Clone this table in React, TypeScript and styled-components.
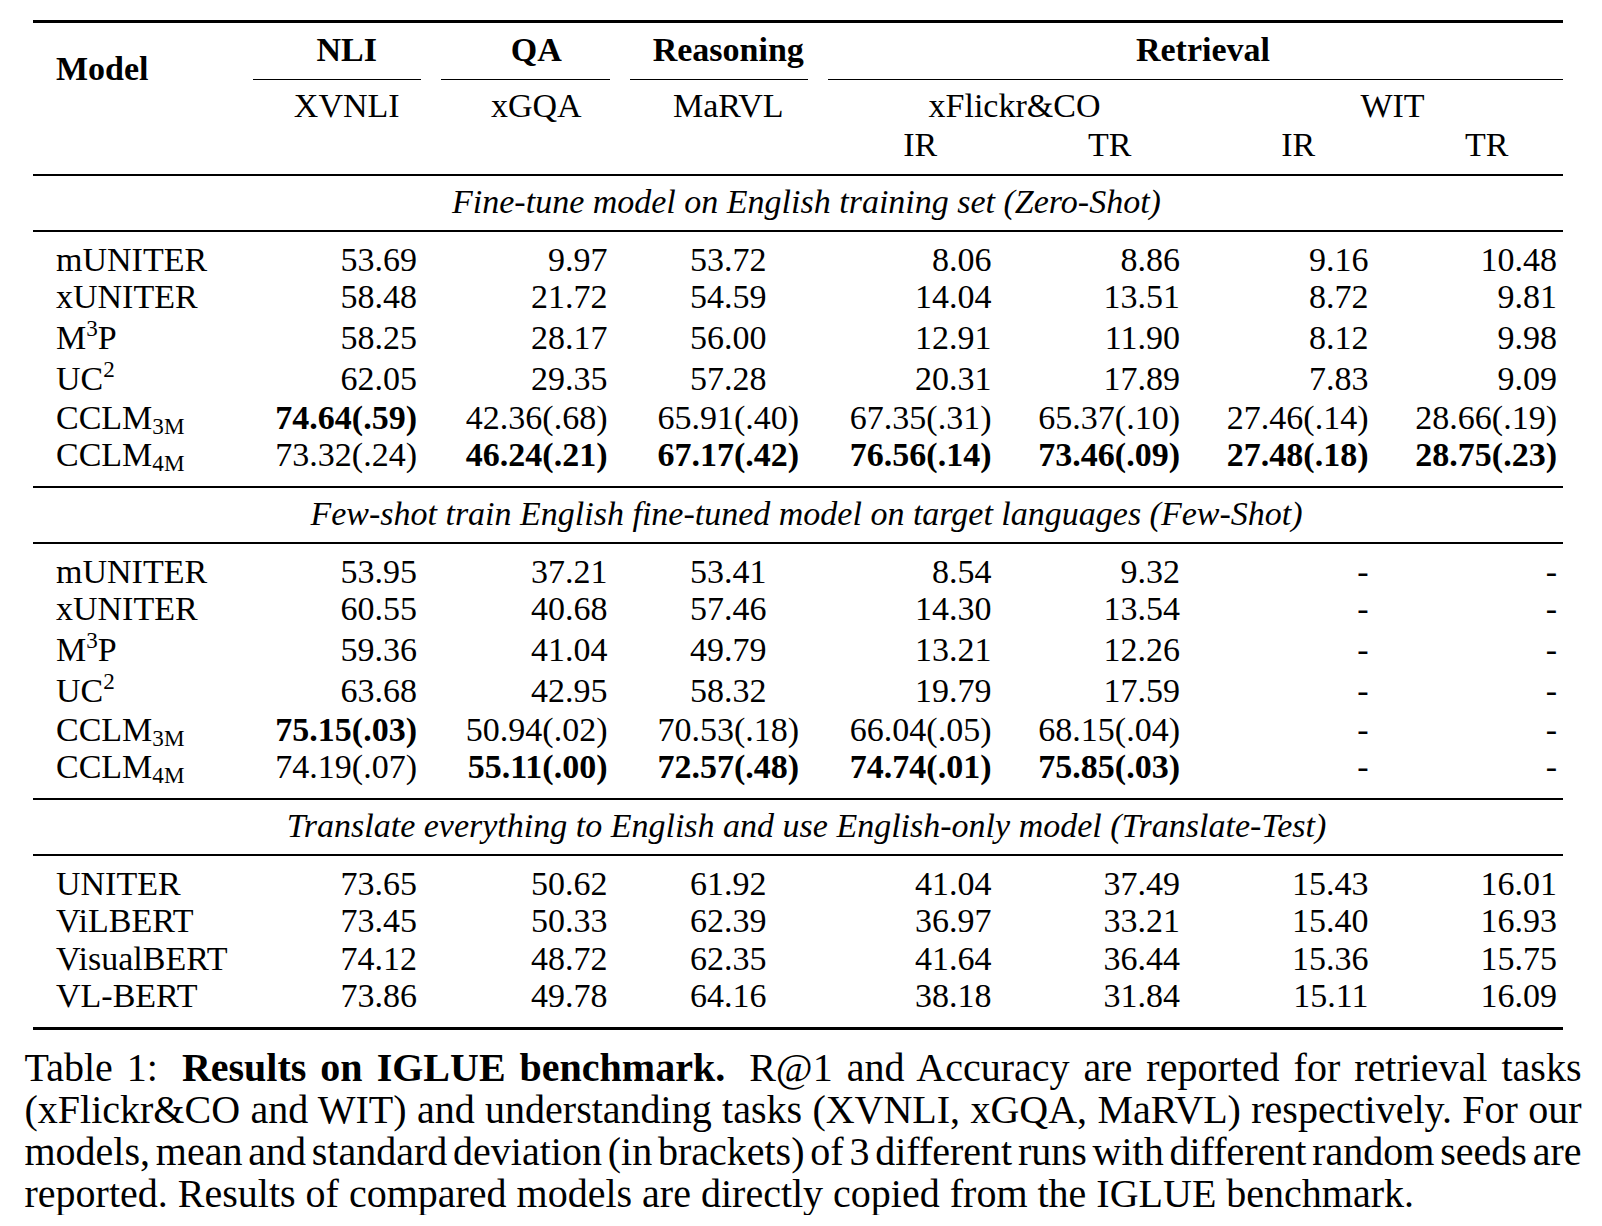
import React from 'react'
import styled, { createGlobalStyle, css } from 'styled-components'

const GlobalStyle = createGlobalStyle`
  html, body {
    margin: 0;
    padding: 0;
    background: #ffffff;
  }
  body {
    font-family: 'Liberation Serif', 'Times New Roman', serif;
    color: #000000;
  }
`

const COLS = '196.5px 188.5px 190.5px 193.5px 190.5px 188.5px 188.5px 164.5px'

const gridCols = css`
  display: grid;
  grid-template-columns: ${COLS};
  padding: 0 6px 0 23px;
`

const Page = styled.div`
  padding-top: 20px;
  width: 1602px;
`

const Table = styled.div`
  margin-left: 33px;
  width: 1530px;
  border-top: 3px solid #000;
  border-bottom: 3px solid #000;
  font-size: 34px;
`

const Head = styled.div`
  ${gridCols}
  grid-template-rows: 57px 45px 49px;
  border-bottom: 2px solid #000;
`

const ModelHead = styled.div`
  grid-column: 1;
  grid-row: 1 / span 3;
  padding-top: 26.5px;
  line-height: 38px;
  font-weight: 700;
`

const Group = styled.div<{ $col: string }>`
  grid-column: ${p => p.$col};
  grid-row: 1;
`

const GroupLabel = styled.div<{ $pl: number; $pr: number }>`
  padding: 8px ${p => p.$pr}px 0 ${p => p.$pl}px;
  line-height: 38px;
  font-weight: 700;
  text-align: center;
  white-space: nowrap;
`

const CMidRule = styled.div<{ $l: number; $r: number }>`
  margin: 9.5px ${p => p.$r}px 0 ${p => p.$l}px;
  height: 1.5px;
  background: #000;
`

const SubHead = styled.div<{ $col: string; $row: number; $pl: number; $pr: number }>`
  grid-column: ${p => p.$col};
  grid-row: ${p => p.$row};
  padding: ${p => (p.$row === 2 ? 7 : 0.5)}px ${p => p.$pr}px 0 ${p => p.$pl}px;
  line-height: 38px;
  text-align: center;
  white-space: nowrap;
`

const SectionTitle = styled.div`
  padding: 7px 6px 8.7px 23px;
  line-height: 38px;
  font-style: italic;
  text-align: center;
  border-bottom: 2px solid #000;
  white-space: nowrap;
`

const Rows = styled.div<{ $last?: boolean }>`
  padding: 9px 0 12.5px;
  border-bottom: ${p => (p.$last ? 'none' : '2px solid #000')};
`

const Row = styled.div<{ $lift?: number }>`
  ${gridCols}
  line-height: 37.5px;
  padding-top: ${p => p.$lift ?? 0}px;
`

type Align = 'left' | 'right' | 'center'

const Cell = styled.div<{ $align: Align; $pr: number; $bold?: boolean }>`
  text-align: ${p => p.$align};
  padding-right: ${p => p.$pr}px;
  font-weight: ${p => (p.$bold ? 700 : 400)};
  white-space: nowrap;
`

const Sup = styled.sup`
  font-size: 0.68em;
  line-height: 0;
  vertical-align: 0.58em;
`

const Sub = styled.sub`
  font-size: 0.68em;
  line-height: 0;
  vertical-align: -0.22em;
`

const Caption = styled.div`
  margin: 16.5px 0 0 24.5px;
  width: 1557px;
  font-size: 40px;
  line-height: 42px;
`

const CapLine = styled.div<{ $last?: boolean }>`
  text-align: ${p => (p.$last ? 'left' : 'justify')};
  text-align-last: ${p => (p.$last ? 'left' : 'justify')};
  word-spacing: ${p => (p.$last ? 0 : -6)}px;
`

const Gap = styled.span`
  display: inline-block;
  width: 10px;
`

// column alignment: model left, r r c r r r r
const ALIGN: Align[] = ['left', 'right', 'right', 'center', 'right', 'right', 'right', 'right']
const PAD = [0, 24, 24, 0, 24, 24, 24, 0]

type DataRow = { model: React.ReactNode; values: string[]; lift?: number }

const M3P = <>M<Sup>3</Sup>P</>
const UC2 = <>UC<Sup>2</Sup></>
const CCLM3 = <>CCLM<Sub>3M</Sub></>
const CCLM4 = <>CCLM<Sub>4M</Sub></>

const zeroShot: DataRow[] = [
  { model: 'mUNITER', values: ['53.69', '9.97', '53.72', '8.06', '8.86', '9.16', '10.48'] },
  { model: 'xUNITER', values: ['58.48', '21.72', '54.59', '14.04', '13.51', '8.72', '9.81'] },
  { model: M3P, values: ['58.25', '28.17', '56.00', '12.91', '11.90', '8.12', '9.98'], lift: 3.3 },
  { model: UC2, values: ['62.05', '29.35', '57.28', '20.31', '17.89', '7.83', '9.09'], lift: 3.3 },
  { model: CCLM3, values: ['!74.64(.59)', '42.36(.68)', '65.91(.40)', '67.35(.31)', '65.37(.10)', '27.46(.14)', '28.66(.19)'], lift: 1.3 },
  { model: CCLM4, values: ['73.32(.24)', '!46.24(.21)', '!67.17(.42)', '!76.56(.14)', '!73.46(.09)', '!27.48(.18)', '!28.75(.23)'] },
]

const fewShot: DataRow[] = [
  { model: 'mUNITER', values: ['53.95', '37.21', '53.41', '8.54', '9.32', '-', '-'] },
  { model: 'xUNITER', values: ['60.55', '40.68', '57.46', '14.30', '13.54', '-', '-'] },
  { model: M3P, values: ['59.36', '41.04', '49.79', '13.21', '12.26', '-', '-'], lift: 3.3 },
  { model: UC2, values: ['63.68', '42.95', '58.32', '19.79', '17.59', '-', '-'], lift: 3.3 },
  { model: CCLM3, values: ['!75.15(.03)', '50.94(.02)', '70.53(.18)', '66.04(.05)', '68.15(.04)', '-', '-'], lift: 1.3 },
  { model: CCLM4, values: ['74.19(.07)', '!55.11(.00)', '!72.57(.48)', '!74.74(.01)', '!75.85(.03)', '-', '-'] },
]

const translateTest: DataRow[] = [
  { model: 'UNITER', values: ['73.65', '50.62', '61.92', '41.04', '37.49', '15.43', '16.01'] },
  { model: 'ViLBERT', values: ['73.45', '50.33', '62.39', '36.97', '33.21', '15.40', '16.93'] },
  { model: 'VisualBERT', values: ['74.12', '48.72', '62.35', '41.64', '36.44', '15.36', '15.75'] },
  { model: 'VL-BERT', values: ['73.86', '49.78', '64.16', '38.18', '31.84', '15.11', '16.09'] },
]

function Section({ title, rows, last }: { title: string; rows: DataRow[]; last?: boolean }) {
  return (
    <>
      <SectionTitle>{title}</SectionTitle>
      <Rows $last={last}>
        {rows.map((r, i) => (
          <Row key={i} $lift={r.lift}>
            <Cell $align="left" $pr={0}>{r.model}</Cell>
            {r.values.map((v, j) => {
              const bold = v.startsWith('!')
              return (
                <Cell key={j} $align={ALIGN[j + 1]} $pr={PAD[j + 1]} $bold={bold}>
                  {bold ? v.slice(1) : v}
                </Cell>
              )
            })}
          </Row>
        ))}
      </Rows>
    </>
  )
}

function App(): JSX.Element {
  return (
    <Page>
      <GlobalStyle />
      <Table>
        <Head>
          <ModelHead>Model</ModelHead>

          <Group $col="2">
            <GroupLabel $pl={24} $pr={24}>NLI</GroupLabel>
            <CMidRule $l={0} $r={20} />
          </Group>
          <Group $col="3">
            <GroupLabel $pl={24} $pr={24}>QA</GroupLabel>
            <CMidRule $l={0} $r={21.5} />
          </Group>
          <Group $col="4">
            <GroupLabel $pl={0} $pr={0}>Reasoning</GroupLabel>
            <CMidRule $l={-2} $r={17} />
          </Group>
          <Group $col="5 / span 4">
            <GroupLabel $pl={24} $pr={0}>Retrieval</GroupLabel>
            <CMidRule $l={3} $r={-6} />
          </Group>

          <SubHead $col="2" $row={2} $pl={24} $pr={24}>XVNLI</SubHead>
          <SubHead $col="3" $row={2} $pl={24} $pr={24}>xGQA</SubHead>
          <SubHead $col="4" $row={2} $pl={0} $pr={0}>MaRVL</SubHead>
          <SubHead $col="5 / span 2" $row={2} $pl={24} $pr={24}>xFlickr&amp;CO</SubHead>
          <SubHead $col="7 / span 2" $row={2} $pl={24} $pr={0}>WIT</SubHead>

          <SubHead $col="5" $row={3} $pl={24} $pr={24}>IR</SubHead>
          <SubHead $col="6" $row={3} $pl={24} $pr={24}>TR</SubHead>
          <SubHead $col="7" $row={3} $pl={24} $pr={24}>IR</SubHead>
          <SubHead $col="8" $row={3} $pl={24} $pr={0}>TR</SubHead>
        </Head>

        <Section title="Fine-tune model on English training set (Zero-Shot)" rows={zeroShot} />
        <Section title="Few-shot train English fine-tuned model on target languages (Few-Shot)" rows={fewShot} />
        <Section
          title="Translate everything to English and use English-only model (Translate-Test)"
          rows={translateTest}
          last
        />
      </Table>

      <Caption>
        <CapLine>
          Table 1:<Gap /> <b>Results on IGLUE benchmark.</b><Gap /> R@1 and Accuracy are reported for retrieval tasks
        </CapLine>
        <CapLine>
          (xFlickr&amp;CO and WIT) and understanding tasks (XVNLI, xGQA, MaRVL) respectively. For our
        </CapLine>
        <CapLine>
          models, mean and standard deviation (in brackets) of 3 different runs with different random seeds are
        </CapLine>
        <CapLine $last>
          reported. Results of compared models are directly copied from the IGLUE benchmark.
        </CapLine>
      </Caption>
    </Page>
  )
}

export default App
